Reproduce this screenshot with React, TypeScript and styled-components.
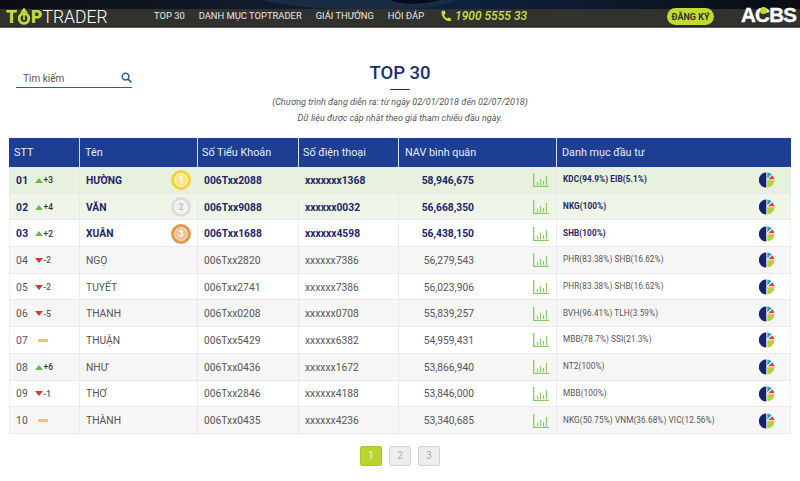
import React from "react";
import styled, { createGlobalStyle } from "styled-components";

const Global = createGlobalStyle`
  html, body { margin: 0; padding: 0; background: #fff; }
  body { font-family: Roboto, "Noto Sans", Arial, sans-serif; width: 800px; height: 481px; overflow: hidden; }
`;

const Header = styled.header`
  position: relative;
  height: 28px;
  background: linear-gradient(#0b0f16 0, #0b0f16 8px, #31312e 9px, #31312e 26px, #161616 27px, #a8a8a8 28px);
  display: flex;
  align-items: center;
  overflow: hidden;
`;
const SkyShape = styled.svg`
  position: absolute;
  left: 0;
  top: 0;
  width: 800px;
  height: 9px;
`;
const Logo = styled.div`
  position: relative;
  width: 154px;
  padding: 5px 0 0 6px;
  box-sizing: border-box;
  display: flex;
  align-items: center;
  flex: none;
`;
const LogoLime = styled.span`
  color: #c3dc3a;
  font-weight: 900;
  font-size: 17.5px;
  line-height: 18px;
`;
const LogoWhite = styled.span`
  color: #fff;
  font-weight: 300;
  font-size: 17.5px;
  line-height: 18px;
`;
const LogoMark = styled.svg`
  flex: none;
  width: 16px;
  height: 18px;
  margin: -2px -1px 0;
`;
const Nav = styled.nav`
  position: relative;
  display: flex;
  align-items: center;
  gap: 14px;
  padding-top: 2px;
  font-size: 9.4px;
  color: #e8e8e8;
  white-space: nowrap;
`;
const Phone = styled.div`
  position: relative;
  display: flex;
  align-items: center;
  gap: 3px;
  margin-left: 16px;
  padding-top: 3px;
  color: #cde04a;
  font-size: 12px;
  font-weight: 500;
  font-style: italic;
  white-space: nowrap;
`;
const PhoneGlyph = styled.svg`
  width: 12px;
  height: 13px;
`;
const Register = styled.div`
  position: absolute;
  left: 667px;
  top: 8px;
  width: 47px;
  height: 17px;
  border-radius: 8.5px;
  background: #bfdb38;
  color: #333;
  font-size: 9px;
  font-weight: 700;
  display: flex;
  align-items: center;
  justify-content: center;
`;
const Acbs = styled.div`
  position: absolute;
  left: 741px;
  top: 4px;
  font-size: 20.5px;
  line-height: 22px;
  font-weight: 700;
  color: #fff;
  letter-spacing: -0.7px;
  font-family: "Liberation Sans", Arial, sans-serif;
  -webkit-text-stroke: 0.4px #fff;
`;
const AcbsC = styled.span`
  position: relative;
  &::after {
    content: "";
    position: absolute;
    left: 4.5px;
    top: 4px;
    width: 7px;
    height: 7px;
    border-radius: 50%;
    background: #bfdb38;
  }
`;

const Hero = styled.section`
  position: relative;
  height: 110px;
  text-align: center;
`;
const Search = styled.div`
  position: absolute;
  left: 16px;
  top: 39px;
  width: 116px;
  height: 21px;
  box-sizing: border-box;
  border-bottom: 1px solid #3a5a8c;
  padding: 2px 0 0 7px;
  display: flex;
  align-items: center;
  justify-content: space-between;
  font-size: 10px;
  color: #555;
`;
const SearchIcon = styled.svg`
  width: 11px;
  height: 11px;
  margin: -2px 0 0 0;
`;
const Title = styled.h1`
  margin: 0;
  padding-top: 33px;
  font-size: 18.5px;
  line-height: 24px;
  font-weight: 500;
  color: #17306f;
`;
const Rule = styled.div`
  width: 20px;
  height: 1px;
  background: #17306f;
  margin: 4px auto 0;
`;
const Note = styled.p`
  margin: 0;
  font-size: 9.05px;
  line-height: 16px;
  font-style: italic;
  color: #555;
  &:first-of-type { margin-top: 4px; }
`;

const Table = styled.table`
  margin-left: 9px;
  width: 782px;
  table-layout: fixed;
  border-collapse: separate;
  border-spacing: 0;
`;
const Th = styled.th<{ $w: number; $pad: number }>`
  width: ${(p) => p.$w}px;
  height: 29px;
  padding: 0 0 0 ${(p) => p.$pad}px;
  box-sizing: border-box;
  background: #1c3f94;
  color: #e8ecf5;
  font-size: 10.8px;
  font-weight: 400;
  text-align: left;
  border-right: 1px solid #d7deee;
  &:last-child { border-right: 0; }
`;
const Tr = styled.tr<{ $bg: string; $top: boolean }>`
  height: 26.7px;
  background: ${(p) => p.$bg};
  color: ${(p) => (p.$top ? "#1e2566" : "#555")};
  font-weight: ${(p) => (p.$top ? 700 : 400)};
`;
const Td = styled.td`
  padding: 1px 0 0 6px;
  box-sizing: border-box;
  font-size: 10.3px;
  border-right: 1px solid #e9ebe9;
  border-bottom: 1px solid #e9ebe9;
  white-space: nowrap;
  &:last-child { border-right: 1px solid #eee; }
  &:first-child { border-left: 1px solid #eee; }
`;
const Cell = styled.div`
  display: flex;
  align-items: center;
  justify-content: space-between;
`;
const RankCell = styled.div`
  display: flex;
  align-items: center;
`;
const RankNo = styled.span`
  width: 19px;
  letter-spacing: 0.3px;
`;
const Delta = styled.span<{ $dn?: boolean }>`
  font-size: 8.4px;
  font-weight: 500;
  margin-left: 0.5px;
  color: ${(p) => (p.$dn ? "#555" : "#333")};
`;
const Up = styled.i`
  width: 0;
  height: 0;
  border-left: 4.5px solid transparent;
  border-right: 4.5px solid transparent;
  border-bottom: 5px solid #66bb4a;
`;
const Down = styled.i`
  width: 0;
  height: 0;
  border-left: 4.5px solid transparent;
  border-right: 4.5px solid transparent;
  border-top: 5px solid #d9363a;
`;
const Flat = styled.i`
  width: 10px;
  height: 2.5px;
  margin-left: 3px;
  border-radius: 1px;
  background: #edc654;
`;
const Medal = styled.div<{ $c: string; $l: string; $t: string }>`
  width: 20px;
  height: 20px;
  margin-right: 6px;
  border-radius: 50%;
  box-sizing: border-box;
  border: 3px solid ${(p) => p.$c};
  box-shadow: inset 0 0 0 1px rgba(255, 255, 255, 0.55);
  background: ${(p) => p.$l};
  color: ${(p) => p.$t};
  font-size: 9px;
  font-weight: 700;
  display: flex;
  align-items: center;
  justify-content: center;
`;
const NavValue = styled.span`
  display: inline-block;
  width: 69px;
  text-align: right;
`;
const NavWrap = styled.div`
  display: flex;
  align-items: center;
  justify-content: space-between;
  padding-right: 7px;
`;
const ChartGlyph = styled.svg`
  width: 16px;
  height: 14px;
`;
const Folio = styled.span`
  font-size: 8.2px;
  letter-spacing: 0.1px;
  margin-top: -2px;
`;
const PieWrap = styled.span`
  display: flex;
  margin-right: 15px;
`;
const Pager = styled.div`
  display: flex;
  justify-content: center;
  gap: 7px;
  margin-top: 12px;
`;
const Page = styled.div<{ $on?: boolean }>`
  width: 22px;
  height: 20px;
  box-sizing: border-box;
  border-radius: 2px;
  border: 1px solid ${(p) => (p.$on ? "#a9c52e" : "#d5d5d5")};
  background: ${(p) => (p.$on ? "#b9d42f" : "#eeeeee")};
  color: ${(p) => (p.$on ? "#eef5c0" : "#aaa")};
  font-size: 10px;
  display: flex;
  align-items: center;
  justify-content: center;
`;

const LogoO = () => (
  <LogoMark viewBox="0 0 16 18">
    <circle cx="8" cy="11.500" r="4.800" fill="none" stroke="#c3dc3a" strokeWidth="2.800" />
    <path d="M8 13V3M5 6L8 2l3 4" fill="none" stroke="#c3dc3a" strokeWidth="1.700" />
  </LogoMark>
);
const PhoneIcon = () => (
  <PhoneGlyph viewBox="0 0 24 24">
    <path d="M6 2l4 1 1 6-3 2c1 3 3 5 6 7l3-2 5 2v4c-1 1-3 1.500-5 1C9 22 3 13 3 6c0-2 1-3 3-4z" fill="#cde04a" />
  </PhoneGlyph>
);
const ChartIcon = () => (
  <ChartGlyph viewBox="0 0 16 14">
    <path d="M.7 0v13.300H16" fill="none" stroke="#86cc62" strokeWidth="1.300" />
    <path d="M4.500 9v3M7.500 6v6M10.500 8v4M13.500 3v9" fill="none" stroke="#86cc62" strokeWidth="1.200" />
  </ChartGlyph>
);
const PieIcon = () => (
  <svg width="16" height="16" viewBox="0 0 16 16">
    <path d="M7.300 .5A7.500 7.500 0 0 0 7.300 15.500z" fill="#18236f" />
    <path d="M8.300 .5A7 7 0 0 1 12.600 2.300L8.300 6.500z" fill="#1aa0c0" />
    <path d="M9 7.300L13.300 3.300A7 7 0 0 1 15.300 7.300z" fill="#e0433a" />
    <path d="M8.300 8.300H15.500A7.300 7.300 0 0 1 8.300 15.500z" fill="#b3cf3b" />
  </svg>
);

type Row = { no: string; kind: "u" | "d" | "f"; delta: string; name: string; acc: string; phone: string; nav: string; folio: string };
const rows: Row[] = [
  { no: "01", kind: "u", delta: "+3", name: "HƯỜNG", acc: "006Txx2088", phone: "xxxxxxx1368", nav: "58,946,675", folio: "KDC(94.9%) EIB(5.1%)" },
  { no: "02", kind: "u", delta: "+4", name: "VĂN", acc: "006Txx9088", phone: "xxxxxx0032", nav: "56,668,350", folio: "NKG(100%)" },
  { no: "03", kind: "u", delta: "+2", name: "XUÂN", acc: "006Txx1688", phone: "xxxxxx4598", nav: "56,438,150", folio: "SHB(100%)" },
  { no: "04", kind: "d", delta: "-2", name: "NGỌ", acc: "006Txx2820", phone: "xxxxxx7386", nav: "56,279,543", folio: "PHR(83.38%) SHB(16.62%)" },
  { no: "05", kind: "d", delta: "-2", name: "TUYẾT", acc: "006Txx2741", phone: "xxxxxx7386", nav: "56,023,906", folio: "PHR(83.38%) SHB(16.62%)" },
  { no: "06", kind: "d", delta: "-5", name: "THANH", acc: "006Txx0208", phone: "xxxxxx0708", nav: "55,839,257", folio: "BVH(96.41%) TLH(3.59%)" },
  { no: "07", kind: "f", delta: "", name: "THUẬN", acc: "006Txx5429", phone: "xxxxxx6382", nav: "54,959,431", folio: "MBB(78.7%) SSI(21.3%)" },
  { no: "08", kind: "u", delta: "+6", name: "NHƯ", acc: "006Txx0436", phone: "xxxxxx1672", nav: "53,866,940", folio: "NT2(100%)" },
  { no: "09", kind: "d", delta: "-1", name: "THƠ", acc: "006Txx2846", phone: "xxxxxx4188", nav: "53,846,000", folio: "MBB(100%)" },
  { no: "10", kind: "f", delta: "", name: "THÀNH", acc: "006Txx0435", phone: "xxxxxx4236", nav: "53,340,685", folio: "NKG(50.75%) VNM(36.68%) VIC(12.56%)" },
];
const medals = [
  { c: "#f2d339", l: "#f7e68a", t: "#fff" },
  { c: "#dcdcdc", l: "#f1f1f1", t: "#c4c4c4" },
  { c: "#e0994f", l: "#f0c292", t: "#fff" },
];
const rowBg = (i: number) => (i === 0 ? "#e7f1de" : i === 1 ? "#eff6e9" : i === 2 ? "#fff" : i % 2 === 1 ? "#f6f6f6" : "#fff");

export default function App() {
  return (
    <>
      <Global />
      <Header>
        <SkyShape viewBox="0 0 800 9">
          <defs>
            <linearGradient id="sky" x1="0" x2="1" y1="0" y2="0">
              <stop offset="0" stopColor="#0b0d12" />
              <stop offset="0.3" stopColor="#101a2a" />
              <stop offset="0.55" stopColor="#0d2240" />
              <stop offset="0.8" stopColor="#0c1728" />
              <stop offset="1" stopColor="#0a0c10" />
            </linearGradient>
          </defs>
          <rect width="800" height="9" fill="url(#sky)" />
          <path d="M262 0C285 6 320 9 350 9H400C425 9 445 5 458 0z" fill="#1a2c44" />
          <path d="M390 0C400 5 425 5 440 0z" fill="#070d18" />
        </SkyShape>
        <Logo>
          <LogoLime>T</LogoLime>
          <LogoO />
          <LogoLime>P</LogoLime>
          <LogoWhite>TRADER</LogoWhite>
        </Logo>
        <Nav>
          <span>TOP 30</span>
          <span>DANH MỤC TOPTRADER</span>
          <span>GIẢI THƯỞNG</span>
          <span>HỎI ĐÁP</span>
        </Nav>
        <Phone>
          <PhoneIcon />
          <span>1900 5555 33</span>
        </Phone>
        <Register>ĐĂNG KÝ</Register>
        <Acbs>A<AcbsC>C</AcbsC>BS</Acbs>
      </Header>
      <Hero>
        <Search>
          <span>Tìm kiếm</span>
          <SearchIcon viewBox="0 0 12 12">
            <circle cx="5" cy="5" r="3.700" fill="none" stroke="#2f5a94" strokeWidth="1.700" />
            <path d="M8 8l3.300 3.300" stroke="#2f5a94" strokeWidth="1.900" />
          </SearchIcon>
        </Search>
        <Title>TOP 30</Title>
        <Rule />
        <Note>(Chương trình đang diễn ra: từ ngày 02/01/2018 đến 02/07/2018)</Note>
        <Note>Dữ liệu được cập nhật theo giá tham chiếu đầu ngày.</Note>
      </Hero>
      <Table>
        <thead>
          <tr>
            <Th $w={71} $pad={5}>STT</Th>
            <Th $w={118} $pad={5}>Tên</Th>
            <Th $w={101} $pad={4}>Số Tiểu Khoản</Th>
            <Th $w={100} $pad={4}>Số điện thoại</Th>
            <Th $w={158} $pad={6}>NAV bình quân</Th>
            <Th $w={234} $pad={5}>Danh mục đầu tư</Th>
          </tr>
        </thead>
        <tbody>
          {rows.map((r, i) => (
            <Tr key={r.no} $bg={rowBg(i)} $top={i < 3}>
              <Td>
                <RankCell>
                  <RankNo>{r.no}</RankNo>
                  {r.kind === "u" && <Up />}
                  {r.kind === "d" && <Down />}
                  {r.kind === "f" && <Flat />}
                  <Delta $dn={r.kind === "d"}>{r.delta}</Delta>
                </RankCell>
              </Td>
              <Td>
                <Cell>
                  <span>{r.name}</span>
                  {i < 3 && (
                    <Medal $c={medals[i].c} $l={medals[i].l} $t={medals[i].t}>
                      {i + 1}
                    </Medal>
                  )}
                </Cell>
              </Td>
              <Td>{r.acc}</Td>
              <Td>{r.phone}</Td>
              <Td>
                <NavWrap>
                  <NavValue>{r.nav}</NavValue>
                  <ChartIcon />
                </NavWrap>
              </Td>
              <Td>
                <Cell>
                  <Folio>{r.folio}</Folio>
                  <PieWrap>
                    <PieIcon />
                  </PieWrap>
                </Cell>
              </Td>
            </Tr>
          ))}
        </tbody>
      </Table>
      <Pager>
        <Page $on>1</Page>
        <Page>2</Page>
        <Page>3</Page>
      </Pager>
    </>
  );
}
